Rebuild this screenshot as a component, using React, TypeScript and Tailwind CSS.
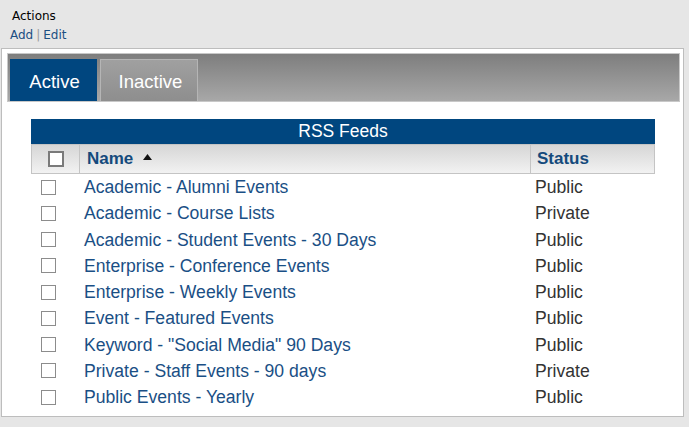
import React from "react";

const FEEDS = [
  { name: "Academic - Alumni Events", status: "Public" },
  { name: "Academic - Course Lists", status: "Private" },
  { name: "Academic - Student Events - 30 Days", status: "Public" },
  { name: "Enterprise - Conference Events", status: "Public" },
  { name: "Enterprise - Weekly Events", status: "Public" },
  { name: "Event - Featured Events", status: "Public" },
  { name: 'Keyword - "Social Media" 90 Days', status: "Public" },
  { name: "Private - Staff Events - 90 days", status: "Private" },
  { name: "Public Events - Yearly", status: "Public" },
];

export default function App() {
  return (
    <div className="w-[689px] h-[427px] bg-[#e6e6e6] overflow-hidden pt-[8px]" style={{ fontFamily: '"Liberation Sans", Arial, sans-serif' }}>
      <div className="pl-[12px] text-[12px] leading-[16px] text-black" style={{ fontFamily: '"DejaVu Sans", Verdana, sans-serif' }}>
        Actions
      </div>
      <div className="pl-[10px] mt-[3px] text-[12px] leading-[16px]" style={{ fontFamily: '"DejaVu Sans", Verdana, sans-serif' }}>
        <span className="text-[#1b4f82]">Add</span>
        <span className="text-[#999] px-[3px]">|</span>
        <span className="text-[#1b4f82]">Edit</span>
      </div>

      <div className="ml-[1px] mt-[5px] w-[683px] h-[369px] bg-white border border-[#bdbdbd]">
        <div className="ml-[5px] mt-[4px] w-[673px] h-[49px] border border-[#c8c8c8] bg-gradient-to-b from-[#7e7e7e] to-[#a8a8a8] flex items-end gap-[3px] pl-[2px]">
          <div className="w-[87px] h-[42px] bg-[#00467f] text-white text-[18.5px] flex items-center justify-center pt-[3px] pl-[2px]">
            Active
          </div>
          <div className="w-[98px] h-[42px] border border-[#b5b5b5] border-b-0 bg-gradient-to-b from-[#a0a0a0] to-[#8e8e8e] text-white text-[18.5px] flex items-center justify-center pl-[3px] pt-[3px]">
            Inactive
          </div>
        </div>

        <div className="ml-[29px] mt-[17px] w-[624px]">
          <div className="h-[25px] bg-[#00467f] text-white text-[17.5px] flex items-center justify-center">
            RSS Feeds
          </div>
          <div className="flex h-[30px] border border-[#c4c4c4] bg-gradient-to-b from-[#d6d6d6] to-[#f2f2f2]">
            <div className="w-[48px] border-r border-[#c4c4c4] flex items-center justify-center">
              <div className="w-[16px] h-[16px] bg-white border-2 border-[#7a7a7a]" />
            </div>
            <div className="w-[451px] border-r border-[#c4c4c4] flex items-center pl-[7px] gap-[10px]">
              <span className="text-[17px] font-bold text-[#144a7c]">Name</span>
              <svg width="9" height="6" viewBox="0 0 9 6" className="-mt-[5px]">
                <polygon points="4.5,0 9,6 0,6" fill="#111" />
              </svg>
            </div>
            <div className="flex-1 flex items-center pl-[6px]">
              <span className="text-[17px] font-bold text-[#144a7c]">Status</span>
            </div>
          </div>
          {FEEDS.map((f) => (
            <div key={f.name} className="flex h-[26.25px] items-center text-[17.6px] leading-[20px]">
              <div className="w-[49px] flex items-center pl-[10px]">
                <div className="w-[15px] h-[15px] bg-white border border-[#8c8c8c]" />
              </div>
              <div className="w-[451px] pl-[4px] text-[#1a4f85]">{f.name}</div>
              <div className="flex-1 pl-[4px] text-[#333]">{f.status}</div>
            </div>
          ))}
        </div>
      </div>
    </div>
  );
}
